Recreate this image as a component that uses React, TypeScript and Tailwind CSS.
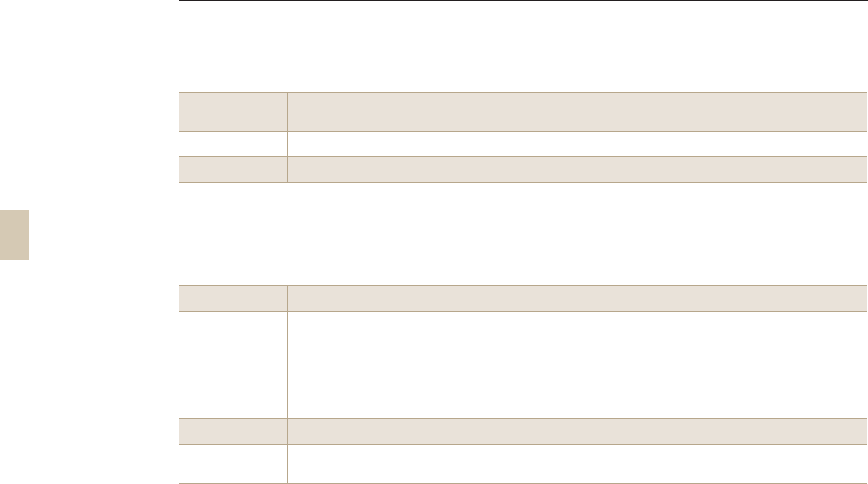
import React from "react";

const B = "border-[#b7a78c]";

function Row({ h, shaded }: { h: string; shaded?: boolean }) {
  return (
    <div className={`flex border-b ${B} ${h} ${shaded ? "bg-[#e9e2d9]" : "bg-white"}`}>
      <div className={`w-[109px] shrink-0 border-r ${B}`} />
      <div className="flex-1" />
    </div>
  );
}

export default function App() {
  return (
    <div className="flex h-[484px] w-[868px] overflow-hidden bg-white" style={{ fontFamily: "'Liberation Sans', Arial, sans-serif" }}>
      <div className="w-[179px] shrink-0">
        <div className="mt-[210px] h-[50px] w-[29px] bg-[#d5c9b4]" />
      </div>
      <div className="flex w-[689px] flex-col border-t border-[#231f20]">
        <div className={`mt-[91px] w-[688px] border-t ${B}`}>
          <Row h="h-[39px]" shaded />
          <Row h="h-[25px]" />
          <Row h="h-[26px]" shaded />
        </div>
        <div className={`mt-[102px] w-[688px] border-t ${B}`}>
          <Row h="h-[26px]" shaded />
          <Row h="h-[107px]" />
          <Row h="h-[26px]" shaded />
          <Row h="h-[39px]" />
        </div>
      </div>
    </div>
  );
}
